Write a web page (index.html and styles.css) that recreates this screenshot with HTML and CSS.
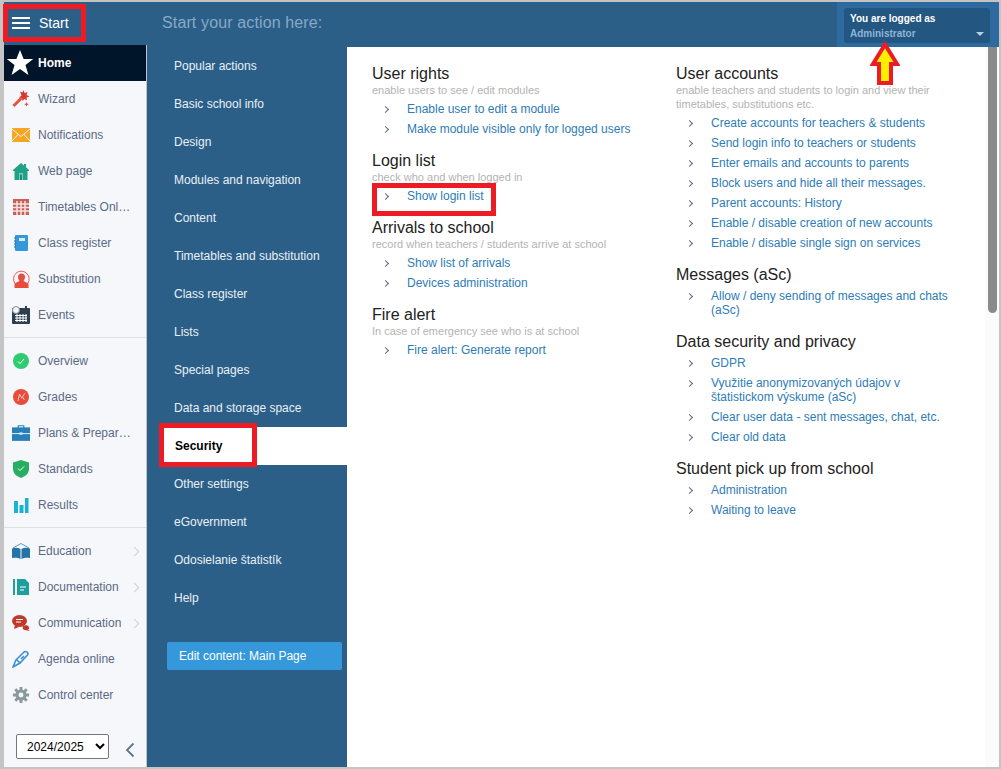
FILE: index.html

```html
<!DOCTYPE html>
<html lang="en">
<head>
  <meta charset="UTF-8" />
  <title>Security</title>
  <link rel="stylesheet" href="styles.css">
</head>
<body>
<div class="app">
  <div class="topbar">
    <div class="start">
      <div class="burger"><span></span><span></span><span></span></div>
      <span>Start</span>
    </div>
    <div class="action-hint">Start your action here:</div>
    <div class="user-wrap">
      <div class="user-box">
        <div class="user-title">You are logged as</div>
        <div class="user-name">Administrator</div>
        <div class="user-caret"></div>
      </div>
    </div>
  </div>

  <div class="main">
    <div class="sidebar">
      <div class="side-item home">
        <svg class="ico-home" viewBox="0 0 28 28"><path fill="#fff" d="M14 1l3.600 9h9.600l-7.700 6 2.900 10L14 20l-8.400 6 2.900-10L.8 10h9.600z"/></svg>
        <span>Home</span>
      </div>
      <div class="side-group">
        <div class="side-item">
          <svg class="ico" viewBox="0 0 18 18"><path stroke="#e8503f" stroke-width="3" d="M1.500 16L9.500 8"/><path fill="#d63c2e" d="M11.500 0l1 3 3-1-1 3 3 1.500-3 1 .5 3-2.500-1.500-2 2-.5-3-3-.5 2.500-2L8 1.500l2.500 1z"/><path fill="#e8503f" d="M14.500 12l.7 1.600 1.600.7-1.600.7-.7 1.600-.7-1.600-1.600-.7 1.600-.7z"/></svg>
          <span class="label">Wizard</span>
        </div>
        <div class="side-item">
          <svg class="ico" viewBox="0 0 18 14"><rect width="18" height="14" fill="#f5a623"/><path fill="none" stroke="#fff" stroke-width=".9" d="M0 1l9 7.500L18 1M0 13l6.500-7M18 13l-6.500-7"/></svg>
          <span class="label">Notifications</span>
        </div>
        <div class="side-item">
          <svg class="ico" viewBox="0 0 18 18"><path fill="#1fa388" d="M9 1L1 8v1h1.500v9h13V9H17V8l-3-2.700V2h-2v1.500z"/><rect x="7" y="11" width="4" height="7" fill="#7fcdbb"/><rect x="8" y="12.500" width="2" height="5.500" fill="#178a73"/></svg>
          <span class="label">Web page</span>
        </div>
        <div class="side-item">
          <svg class="ico" viewBox="0 0 18 18"><rect x="1" y="1" width="16" height="16" fill="#c9605c"/><path stroke="#f6e3e1" stroke-width="1.500" d="M1 6h16M1 9.500h16M1 13h16M5 3v14M9 3v14M13 3v14"/></svg>
          <span class="label">Timetables Onl…</span>
        </div>
        <div class="side-item">
          <svg class="ico" viewBox="0 0 18 18"><rect x="3" y="1" width="13" height="16" rx="1" fill="#3498db"/><rect x="7" y="4" width="6" height="3" fill="#d6ecfa"/><path stroke="#1f6fa8" d="M2 4h2M2 7h2M2 10h2M2 13h2"/></svg>
          <span class="label">Class register</span>
        </div>
        <div class="side-item">
          <svg class="ico" viewBox="0 0 18 18"><path fill="#e74c3c" d="M9.500 3.500a3.500 3.500 0 013.500 3.500c0 1.800-1 3-1.500 4l5 2.500V18h-14v-4.500l5-2.500C7 10 6 8.800 6 7a3.500 3.500 0 013.500-3.500z"/><path fill="none" stroke="#e74c3c" stroke-width=".9" d="M3 13.500A7.800 7.800 0 1116 13"/></svg>
          <span class="label">Substitution</span>
        </div>
        <div class="side-item">
          <svg class="ico" viewBox="0 0 18 18"><rect y="2" width="18" height="16" rx="1" fill="#2c3e50"/><path stroke="#fff" d="M5 8v8M8 8v8M11 8v8M14 8v8M3 9.500h12M3 12h12M3 14.500h12"/><circle cx="4" cy="4" r="3.500" fill="#f6f7fa" stroke="#7f8c8d"/><rect x="13" width="2" height="4" fill="#2c3e50"/></svg>
          <span class="label">Events</span>
        </div>
      </div>
      <div class="side-group">
        <div class="side-item">
          <svg class="ico" viewBox="0 0 18 18"><circle cx="9" cy="9" r="8" fill="#2ecc71"/><path fill="none" stroke="#fff" d="M6 9.500l2 2 4-4.500"/></svg>
          <span class="label">Overview</span>
        </div>
        <div class="side-item">
          <svg class="ico" viewBox="0 0 18 18"><circle cx="9" cy="9" r="8" fill="#e74c3c"/><path fill="none" stroke="#fbd5d0" stroke-width=".9" d="M6 13l1.500-7 2.500 4.500M13 5l-2.500 4 2 3"/></svg>
          <span class="label">Grades</span>
        </div>
        <div class="side-item">
          <svg class="ico" viewBox="0 0 16 14"><path fill="none" stroke="#2980b9" d="M5.500 2.500V.5h5v2"/><rect y="2" width="16" height="12" fill="#2980b9"/><path stroke="#cfe5f5" d="M0 7.500h16"/><rect x="6.500" y="6.500" width="3" height="2" fill="#cfe5f5"/></svg>
          <span class="label">Plans &amp; Prepar…</span>
        </div>
        <div class="side-item">
          <svg class="ico" viewBox="0 0 18 18"><path fill="#27ae60" d="M9 0l8 2.500V9c0 4.500-4 7.500-8 9-4-1.500-8-4.500-8-9V2.500z"/><path fill="none" stroke="#fff" d="M6 8.500l2 2 4-4"/></svg>
          <span class="label">Standards</span>
        </div>
        <div class="side-item">
          <svg class="ico" viewBox="0 0 18 18"><path fill="#17b5d3" d="M2 5h4v12H2zM7.500 9h4v8h-4zM13 2h3.500v15H13z"/></svg>
          <span class="label">Results</span>
        </div>
      </div>
      <div class="side-group last">
        <div class="side-item">
          <svg class="ico" viewBox="0 0 18 16"><path fill="none" stroke="#2980b9" stroke-width=".8" d="M1 5l8-4.500L17 5"/><path fill="#2573a7" d="M0 5.500c3-1 6-1 8.500.5v10C6 14.500 3 14.500 0 15zM18 5.500c-3-1-6-1-8.500.5v10c2.500-1.500 5.500-1.500 8.500-1z"/></svg>
          <span class="label">Education</span>
          <span class="more"></span>
        </div>
        <div class="side-item">
          <svg class="ico" viewBox="0 0 18 18"><path fill="#1f9e9e" d="M1 1h2v16H1zM5 1h8l4 4v12H5z"/><path stroke="#fff" d="M8 9h6M8 12h4"/></svg>
          <span class="label">Documentation</span>
          <span class="more"></span>
        </div>
        <div class="side-item">
          <svg class="ico" viewBox="0 0 18 16"><ellipse cx="7.500" cy="6" rx="7.500" ry="6" fill="#c0392b"/><path fill="#c0392b" d="M3 10l-1 4 5-2zM11 11c2-1 5-1 6 1 .5 1 0 2-1 2.500l2 1.500-5-1c-2 0-3-2-2-4z"/><path stroke="#fff" d="M4 4.500h7M4 7h5"/></svg>
          <span class="label">Communication</span>
          <span class="more"></span>
        </div>
        <div class="side-item">
          <svg class="ico" viewBox="0 0 18 18"><path fill="none" stroke="#3d8fd6" stroke-width="1.600" d="M1 17l3-7L12 2c2-1.500 5 1 3.500 3L8 13zM5 10l3 3M9 9l3-3"/></svg>
          <span class="label">Agenda online</span>
        </div>
        <div class="side-item">
          <svg class="ico" viewBox="-1 -1 20 20"><circle cx="9" cy="9" r="4.500" fill="none" stroke="#8a9a9c" stroke-width="3.500"/><path stroke="#8a9a9c" stroke-width="3.200" d="M9 0v3.500M9 14.500V18M0 9h3.500M14.500 9H18M2.600 2.600l2.500 2.500M12.900 12.900l2.500 2.500M2.600 15.400l2.500-2.500M12.900 5.100l2.500-2.500"/></svg>
          <span class="label">Control center</span>
        </div>
      </div>
      <div class="side-foot">
        <select class="year"><option>2024/2025</option></select>
        <svg class="collapse" viewBox="0 0 10 16"><path fill="none" stroke="#5f7488" stroke-width="1.800" d="M8.500 1.500L2 8l6.500 6.500"/></svg>
      </div>
    </div>

    <div class="nav">
      <div class="nav-item">Popular actions</div>
      <div class="nav-item">Basic school info</div>
      <div class="nav-item">Design</div>
      <div class="nav-item">Modules and navigation</div>
      <div class="nav-item">Content</div>
      <div class="nav-item">Timetables and substitution</div>
      <div class="nav-item">Class register</div>
      <div class="nav-item">Lists</div>
      <div class="nav-item">Special pages</div>
      <div class="nav-item">Data and storage space</div>
      <div class="nav-item active">Security</div>
      <div class="nav-item">Other settings</div>
      <div class="nav-item">eGovernment</div>
      <div class="nav-item">Odosielanie štatistík</div>
      <div class="nav-item">Help</div>
      <div class="edit-btn">Edit content: Main Page</div>
    </div>

    <div class="content">
      <div class="col">
        <div class="sec">
          <h3>User rights</h3>
          <p class="sub">enable users to see / edit modules</p>
          <a class="lnk">Enable user to edit a module</a>
          <a class="lnk">Make module visible only for logged users</a>
        </div>
        <div class="sec">
          <h3>Login list</h3>
          <p class="sub">check who and when logged in</p>
          <a class="lnk">Show login list</a>
        </div>
        <div class="sec">
          <h3>Arrivals to school</h3>
          <p class="sub">record when teachers / students arrive at school</p>
          <a class="lnk">Show list of arrivals</a>
          <a class="lnk">Devices administration</a>
        </div>
        <div class="sec">
          <h3>Fire alert</h3>
          <p class="sub">In case of emergency see who is at school</p>
          <a class="lnk">Fire alert: Generate report</a>
        </div>
      </div>
      <div class="col">
        <div class="sec">
          <h3>User accounts</h3>
          <p class="sub">enable teachers and students to login and view their timetables, substitutions etc.</p>
          <a class="lnk">Create accounts for teachers &amp; students</a>
          <a class="lnk">Send login info to teachers or students</a>
          <a class="lnk">Enter emails and accounts to parents</a>
          <a class="lnk">Block users and hide all their messages.</a>
          <a class="lnk">Parent accounts: History</a>
          <a class="lnk">Enable / disable creation of new accounts</a>
          <a class="lnk">Enable / disable single sign on services</a>
        </div>
        <div class="sec">
          <h3>Messages (aSc)</h3>
          <a class="lnk">Allow / deny sending of messages and chats (aSc)</a>
        </div>
        <div class="sec">
          <h3>Data security and privacy</h3>
          <a class="lnk">GDPR</a>
          <a class="lnk">Využitie anonymizovaných údajov v štatistickom výskume (aSc)</a>
          <a class="lnk">Clear user data - sent messages, chat, etc.</a>
          <a class="lnk">Clear old data</a>
        </div>
        <div class="sec">
          <h3>Student pick up from school</h3>
          <a class="lnk">Administration</a>
          <a class="lnk">Waiting to leave</a>
        </div>
      </div>
    </div>

    <div class="scrollbar"><div class="thumb"></div></div>
  </div>
</div>

<!-- red / yellow marks drawn over the screenshot -->
<div class="mark mark-start"></div>
<div class="mark mark-security"></div>
<div class="mark mark-login"></div>
<svg class="mark-arrow" viewBox="0 0 30 44"><path fill="#ffee00" stroke="#ed1c24" stroke-width="4" d="M15 3.500L27 23H21V42H9V23H3z"/></svg>
</body>
</html>
```

FILE: styles.css

```css
* { box-sizing: border-box; }
html, body { margin: 0; height: 100%; overflow: hidden; }
body { font-family: "Liberation Sans", Arial, sans-serif; font-size: 12px; background: #c4c4c4; }

.app { height: 769px; padding: 2px 2px 2px 4px; display: flex; flex-direction: column; }

.topbar { height: 45px; background: #2c5f88; display: flex; align-items: flex-start; color: #fff; flex: none; }
.start { width: 143px; height: 41px; display: flex; align-items: center; font-size: 14px; padding-left: 8px; }
.burger { width: 18px; margin-right: 9px; display: flex; flex-direction: column; gap: 3px; }
.burger span { display: block; height: 2px; background: #fff; }
.action-hint { flex: 1; padding-left: 15px; font-size: 16px; letter-spacing: .13px; line-height: 41px; color: #86a9c6; }
.user-wrap { width: 162px; height: 100%; background: #2d6a9f; padding: 6px 9px 4px 7px; }
.user-box { position: relative; height: 35px; background: #235680; border-radius: 3px; padding: 4px 6px; font-size: 10px; line-height: 13px; }
.user-title { font-weight: bold; }
.user-name { font-weight: bold; color: #8db4d8; margin-top: 2px; }
.user-caret { position: absolute; right: 6px; bottom: 7px; border: 4px solid transparent; border-top: 4px solid #b9cfe2; border-bottom: 0; }

.main { flex: 1; display: flex; min-height: 0; }

.sidebar { width: 143px; flex: none; margin-top: -2px; background: #f6f7fa; border-right: 1px solid #c4c4c4; display: flex; flex-direction: column; }
.side-item { height: 36px; display: flex; align-items: center; color: #5a6a85; position: relative; }
.side-item .ico { width: 18px; height: 18px; margin: 0 8px 0 8px; flex: none; }
.side-item .label { white-space: nowrap; }
.home { background: #001529; color: #fff; font-weight: bold; }
.ico-home { width: 28px; height: 28px; margin: 0 4px 0 2px; }
.side-group { padding: 0 0 4px; border-bottom: 1px solid #dcdfe5; margin-bottom: 5px; }
.side-group.last { border-bottom: 0; }
.more { position: absolute; right: 8px; top: 15px; width: 7px; height: 7px; border-top: 1px solid #ccd0d6; border-right: 1px solid #ccd0d6; transform: rotate(45deg); }
.side-foot { margin-top: auto; height: 40px; display: flex; align-items: flex-start; padding: 7px 0 0 12px; }
.year { width: 93px; height: 25px; font-family: "Liberation Sans", Arial, sans-serif; font-size: 12px; background: #fff; border: 1px solid #767676; border-radius: 2px; padding-left: 6px; color: #000; }
.collapse { width: 10px; height: 16px; margin: 8px 0 0 16px; }

.nav { width: 200px; flex: none; background: #2c5f88; color: #e8f0f6; }
.nav-item { height: 38px; line-height: 38px; padding-left: 27px; white-space: nowrap; }
.nav-item.active { margin-left: 14px; padding-left: 14px; background: #fff; color: #000; font-weight: bold; }
.edit-btn { margin: 25px 5px 0 20px; height: 28px; line-height: 28px; padding-left: 12px; background: #3498db; border-radius: 2px; color: #fff; }

.content { flex: 1; background: #fff; display: flex; padding: 16px 0 0 25px; min-width: 0; }
.col { width: 304px; padding-right: 24px; }
.sec { margin-bottom: 11px; }
.sec h3 { margin: 0; height: 20px; font-size: 16px; font-weight: normal; line-height: 22px; color: #222; }
.sub { margin: 0 0 2px; font-size: 11px; line-height: 14px; color: #b3b3b3; }
.sec h3 + .lnk { margin-top: 2px; }
.lnk { display: block; position: relative; padding: 3px 0 3px 35px; line-height: 14px; color: #2e7cb8; }
.lnk::before { content: ""; position: absolute; left: 11px; top: 8px; width: 4px; height: 4px; border-top: 1px solid #5a6a85; border-right: 1px solid #5a6a85; transform: rotate(45deg); }

.scrollbar { width: 14px; flex: none; background: #fbfbfb; padding-left: 3px; }
.thumb { width: 9px; height: 266px; background: #8a8a8a; border-radius: 0 0 5px 5px; }

.mark { position: absolute; border: 5px solid #ed1c24; }
.mark-start { left: 3px; top: 4px; width: 83px; height: 38px; }
.mark-security { left: 159px; top: 423px; width: 98px; height: 44px; }
.mark-login { left: 372px; top: 183px; width: 124px; height: 33px; }
.mark-arrow { position: absolute; left: 870px; top: 41px; width: 30px; height: 44px; }
```
